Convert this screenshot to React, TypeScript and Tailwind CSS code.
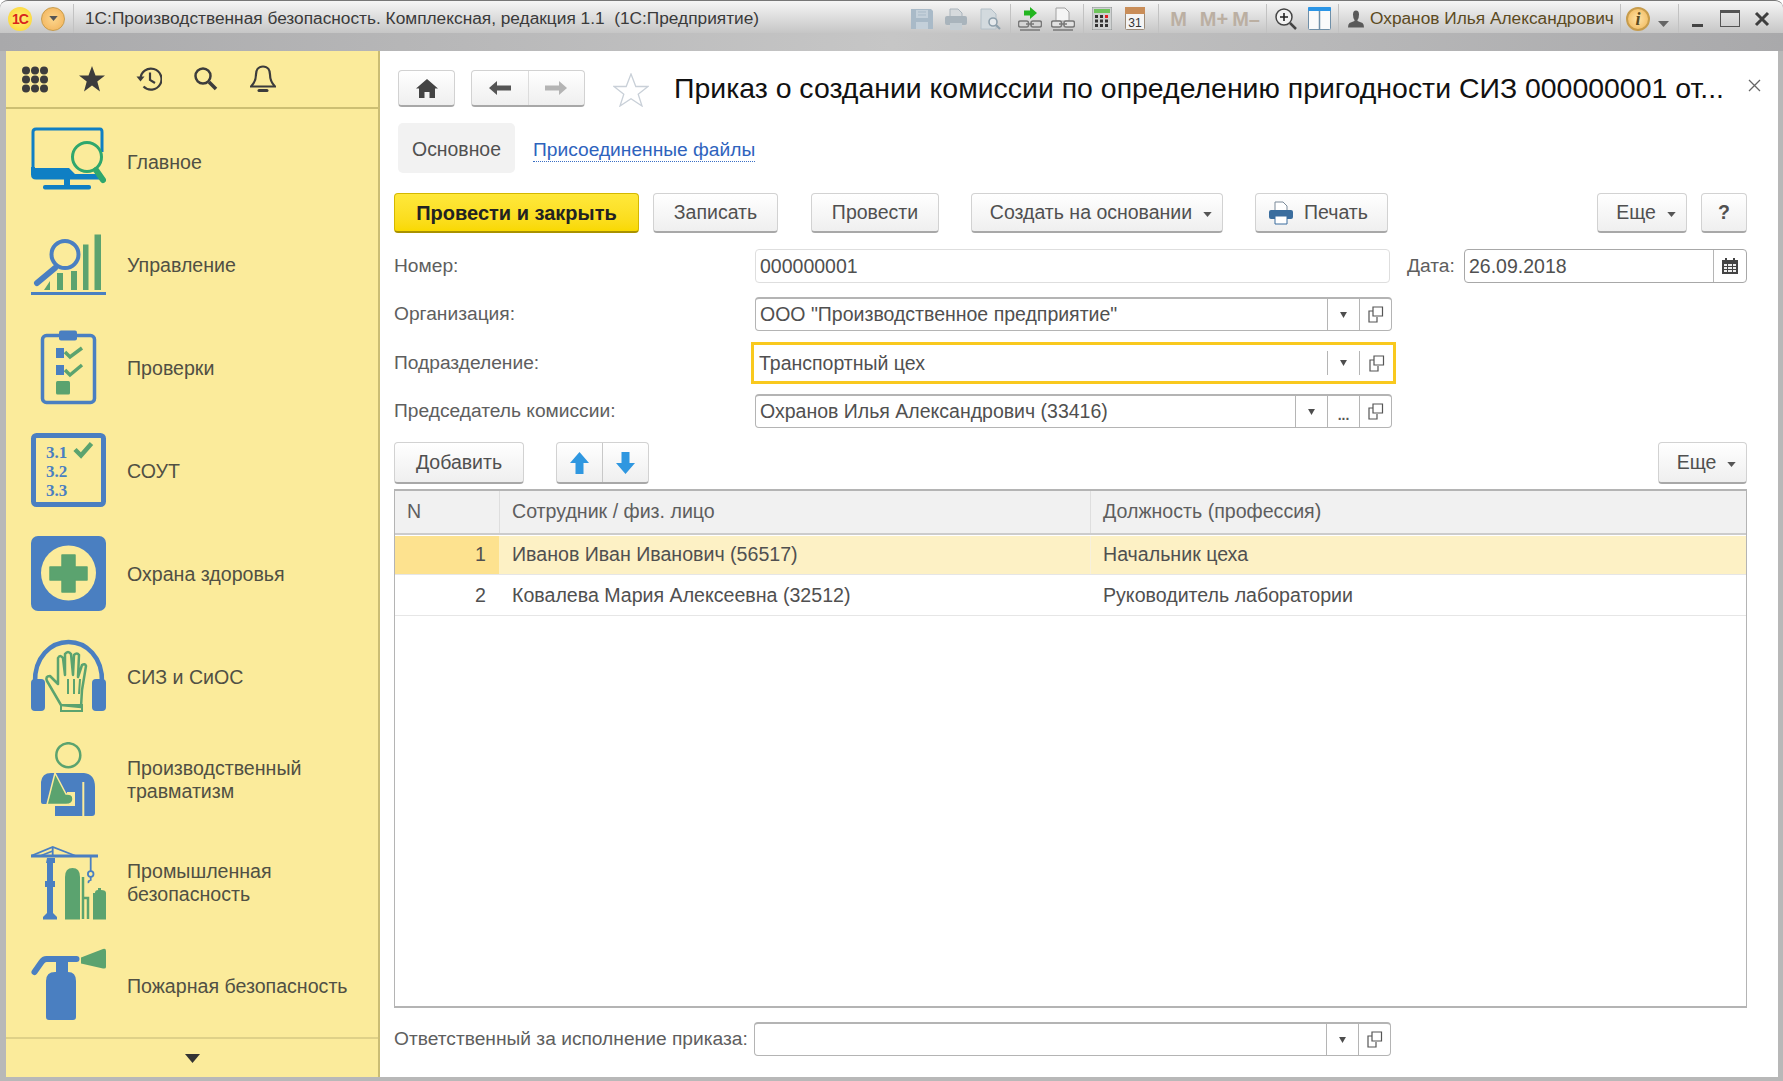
import type { ReactNode } from 'react';

const BLUE = '#4a7fc1';
const GREEN = '#5ba36f';

// Кнопка формы
const Btn = ({ className = '', children }: { className?: string; children: ReactNode }) => (
  <button className={`flex items-center justify-center rounded-[4px] border border-[#d2d2d2] border-b-2 border-b-[#a8a8a8] bg-linear-to-b from-white to-[#efefef] pt-[1px] text-[19.5px] text-[#505050] ${className}`}>
    {children}
  </button>
);

const Caret = ({ className = '' }: { className?: string }) => (
  <svg width="9" height="5" viewBox="0 0 10 6" className={className}>
    <path d="M0 0h10L5 6z" fill="#555" />
  </svg>
);

const SmallCaret = () => (
  <svg width="7" height="6" viewBox="0 0 8 7">
    <path d="M0 0h8L4 7z" fill="#4d4d4d" />
  </svg>
);

const OpenIcon = () => (
  <svg width="16" height="17" viewBox="0 0 16 17" fill="none" stroke="#555" strokeWidth="1.2">
    <path d="M5 1h9.5v9H5zM5 5H1v11h8v-5" />
  </svg>
);

const FieldCell = ({ children }: { children: ReactNode }) => (
  <div className="flex w-[32px] shrink-0 items-center justify-center self-stretch border-l border-[#b5b5b5]">{children}</div>
);

const Field = ({ value, extra = false }: { value: string; extra?: boolean }) => (
  <div className="flex h-[34px] w-[637px] items-center rounded-[4px] border border-[#b4b4b4] border-t-2 bg-white text-[19.5px] text-[#505050]">
    <span className="flex-1 pl-[4px]">{value}</span>
    <FieldCell><SmallCaret /></FieldCell>
    {extra && (
      <FieldCell>
        <span className="mt-[6px] text-[14px] font-bold leading-none text-[#555]">...</span>
      </FieldCell>
    )}
    <FieldCell><OpenIcon /></FieldCell>
  </div>
);

const Label = ({ children, className = 'w-[361px]' }: { children: ReactNode; className?: string }) => (
  <div className={`shrink-0 pt-[1px] text-[19.2px] text-[#5e5e5e] ${className}`}>{children}</div>
);

/* ---------- иконки разделов ---------- */
const MainIcon = () => (
  <svg width="75" height="75" viewBox="0 0 75 75" fill="none">
    <path d="M2 44V8q0-3 3-3h64q2 0 2 3v20" stroke="#0f7fc4" strokeWidth="3" />
    <path d="M0 43h4v1h34l6 6h22l5 5.5H5q-5 0-5-5z" fill="#0f7fc4" />
    <path d="M33 55h6v6h-6z" fill="#0f7fc4" />
    <rect x="12" y="61" width="48" height="4.5" rx="2" fill="#0f7fc4" />
    <circle cx="56" cy="33" r="14.5" fill="#fbeb9b" stroke="#2fa76d" strokeWidth="3" />
    <path d="M65 46l7 10" stroke="#2fa76d" strokeWidth="6" strokeLinecap="round" />
  </svg>
);

const ManageIcon = () => (
  <svg width="75" height="75" viewBox="0 0 75 75" fill="none">
    <path d="M13 63l6-9v9zM26 46h6v17h-6zM40 44h6v19h-6zM52 17.500h5.500V63H52zM63.500 7.500H70V63h-6.500z" fill={GREEN} />
    <circle cx="34" cy="27.500" r="13.500" fill="#fbeb9b" stroke={BLUE} strokeWidth="4" />
    <path d="M24 41L6 56" stroke={BLUE} strokeWidth="6" strokeLinecap="round" />
    <path d="M0 66.500h75" stroke={BLUE} strokeWidth="3" />
  </svg>
);

const ChecksIcon = () => (
  <svg width="75" height="75" viewBox="0 0 75 75" fill="none">
    <rect x="11.500" y="5.500" width="52" height="67" rx="4" stroke={BLUE} strokeWidth="3.500" />
    <rect x="28" y="0.500" width="18" height="10" rx="2" fill={BLUE} />
    <path d="M25 18h8v10h-8zM25 35h8v10h-8z" fill={BLUE} />
    <path d="M34 22l5 5 12-9M34 40l5 5 12-10" stroke={GREEN} strokeWidth="3.500" />
    <rect x="25" y="51" width="14" height="13.500" rx="1.500" fill={GREEN} />
  </svg>
);

const SoutIcon = () => (
  <svg width="75" height="75" viewBox="0 0 75 75" fill="none">
    <rect x="2.500" y="2.500" width="70" height="69" rx="3" stroke={BLUE} strokeWidth="5" />
    <g fill={BLUE} fontFamily="'Liberation Serif', serif" fontWeight="700" fontSize="17">
      <text x="15" y="25">3.1</text>
      <text x="15" y="44">3.2</text>
      <text x="15" y="63">3.3</text>
    </g>
    <path d="M44 16.500l6 6 10.500-12" stroke={GREEN} strokeWidth="4.500" />
  </svg>
);

const HealthIcon = () => (
  <svg width="75" height="75" viewBox="0 0 75 75">
    <rect width="75" height="75" rx="7" fill={BLUE} />
    <circle cx="37.500" cy="37" r="27.500" fill="#fbeb9b" />
    <path d="M31 19h13v12h12v13H44v12H31V44H19V31h12z" fill={GREEN} stroke={GREEN} strokeLinejoin="round" strokeWidth="1.500" />
  </svg>
);

const SizIcon = () => (
  <svg width="75" height="75" viewBox="0 0 75 75" fill="none">
    <path d="M4 44C3 18 20 3 37.500 3S72 18 71 44" stroke={BLUE} strokeWidth="4.500" />
    <rect y="40" width="14" height="32" rx="4" fill={BLUE} />
    <rect x="61" y="40" width="14" height="32" rx="4" fill={BLUE} />
    <path d="M30 66L16 42q-2-5 3-5l8 8V19q2-4 5 0l2 17V15q3-4 6 0l2 21 1-20q3-3 5 0l-1 22 4-12q3-2 4 1l-4 24-1 17z" stroke={GREEN} strokeWidth="2.500" strokeLinejoin="round" />
    <path d="M30 66h21v6H30zM37 40v15M43 40v15M49 40l-1 15" stroke={GREEN} strokeWidth="2" />
  </svg>
);

const InjuryIcon = () => (
  <svg width="75" height="75" viewBox="0 0 75 75" fill="none">
    <circle cx="37.300" cy="13.200" r="12" stroke={GREEN} strokeWidth="2.500" />
    <path d="M10 40q1-9 10-9h33q11 1 11 14v26q0 3-3 3H24v-10h20V50H36V62H12q-2 0-2-2z" fill={BLUE} />
    <path d="M24 31L16 62.500h19q7 0 7-5.500t-7-5z" fill={GREEN} stroke="#fbeb9b" strokeWidth="1.500" />
    <path d="M52.300 40v34" stroke="#fbeb9b" strokeWidth="2" />
  </svg>
);

const IndustryIcon = () => (
  <svg width="75" height="75" viewBox="0 0 75 75" fill="none">
    <path d="M0 11L21.700 2 45 11M9 11l12.700-5M21.700 2v9" stroke={BLUE} strokeWidth="1.800" />
    <path d="M0 9.500h67v3H0z" fill={BLUE} />
    <path d="M16 13h8v5h-2v18h2v6h-2v26l4 4v2.500H12V72l4-4V42h-2v-6h2V18h-1z" fill={BLUE} />
    <path d="M59.700 12v15" stroke={BLUE} strokeWidth="1.800" />
    <circle cx="59.700" cy="29" r="2.800" stroke={BLUE} strokeWidth="1.800" />
    <path d="M59.700 32v3q-3 1-2 3" stroke={BLUE} strokeWidth="1.800" />
    <path d="M34 32q0-9 7.500-9T49 32v42.500H34z" fill={GREEN} />
    <path d="M52 32v42M52 53h5v21" stroke={GREEN} strokeWidth="2.500" />
    <path d="M64 48q0-3 3-3v-2h3v2q5 0 5 3v26.500H62V48z" fill={GREEN} />
  </svg>
);

const FireIcon = () => (
  <svg width="75" height="75" viewBox="0 0 75 75" fill="none">
    <path d="M15 33q0-9 9-9h1V13h12v11q8 0 8 9v36q0 3-3 3H18q-3 0-3-3z" fill={BLUE} />
    <path d="M3.500 24l7-10q2-3 5-3h30" stroke={BLUE} strokeWidth="6" strokeLinecap="round" />
    <path d="M50 9.500L72 1q3-1 3 2v16q0 2-3 1.500L50 15.500z" fill={GREEN} />
  </svg>
);

const NAV: { title: ReactNode; icon: ReactNode }[] = [
  { title: 'Главное', icon: <MainIcon /> },
  { title: 'Управление', icon: <ManageIcon /> },
  { title: 'Проверки', icon: <ChecksIcon /> },
  { title: 'СОУТ', icon: <SoutIcon /> },
  { title: 'Охрана здоровья', icon: <HealthIcon /> },
  { title: 'СИЗ и СиОС', icon: <SizIcon /> },
  { title: <>Производственный<br />травматизм</>, icon: <InjuryIcon /> },
  { title: <>Промышленная<br />безопасность</>, icon: <IndustryIcon /> },
  { title: 'Пожарная безопасность', icon: <FireIcon /> },
];

const Sep = ({ className = '' }: { className?: string }) => (
  <div className={`h-[30px] w-px shrink-0 bg-[#c2c2c2] ${className}`} />
);

const TitleTools = () => (
  <div className="ml-auto mr-[13px] flex items-center">
    {/* сохранить */}
    <svg width="22" height="22" viewBox="0 0 22 22"><path d="M0 1h20l2 2v18H0z" fill="#a9bac8" /><path d="M5 2h12v8H5zM5 14h12v7H5z" fill="#c4d0da" /><path d="M7 4h8M7 7h8" stroke="#a9bac8" /></svg>
    {/* печать */}
    <svg width="22" height="22" viewBox="0 0 22 22" className="ml-[12px]"><path d="M5 9V1h8l4 4v4z" fill="#d6dadd" stroke="#aab4bc" /><rect y="8" width="22" height="9" rx="2" fill="#a9b4bc" /><path d="M5 15h12v7H5z" fill="#c4cdd3" /></svg>
    {/* просмотр */}
    <svg width="22" height="22" viewBox="0 0 22 22" fill="none" className="ml-[13px]"><path d="M1 21V1h10l5 5v15z" fill="#d3dade" stroke="#b4c0c8" /><circle cx="13" cy="14" r="4" fill="#e5e9ec" stroke="#8ea0ac" strokeWidth="1.600" /><path d="M16 17l4 4" stroke="#8ea0ac" strokeWidth="2.200" /></svg>
    <Sep className="ml-[8px]" />
    {/* ссылка со стрелкой */}
    <svg width="24" height="24" viewBox="0 0 24 24" fill="none" className="ml-[7px]"><path d="M6 3.500h6V0l7 6-7 6V8.500H6z" fill="#22b51f" /><rect x="0.500" y="14" width="10" height="6" rx="2" stroke="#787878" strokeWidth="1.500" fill="#d4d4d4" /><rect x="13" y="14" width="10.500" height="6" rx="2" stroke="#787878" strokeWidth="1.500" fill="#d4d4d4" /><path d="M8 17h8M2 23h20" stroke="#787878" strokeWidth="1.500" /></svg>
    <svg width="24" height="24" viewBox="0 0 24 24" fill="none" className="ml-[9px]"><path d="M5 14V1h9l4 4v9z" fill="#f5f5f5" stroke="#a0a0a0" /><rect x="0.500" y="14" width="10" height="6" rx="2" stroke="#787878" strokeWidth="1.500" fill="#e2e2e2" /><rect x="13" y="14" width="10.500" height="6" rx="2" stroke="#787878" strokeWidth="1.500" fill="#e2e2e2" /><path d="M8 17h8M2 23h20" stroke="#787878" strokeWidth="1.500" /></svg>
    <Sep className="ml-[8px]" />
    {/* калькулятор */}
    <svg width="20" height="23" viewBox="0 0 20 23" className="ml-[8px]"><rect width="20" height="23" rx="1.500" fill="#cfd2d2" stroke="#8b8f8f" /><rect x="2" y="2" width="16" height="4" fill="#6ec45c" /><path d="M3 8h3v3H3zM8 8h3v3H8zM3 12.500h3v3H3zM8 12.500h3v3H8zM13 12.500h3v3h-3zM3 17h3v3H3zM8 17h3v3H8zM13 17h3v3h-3z" fill="#333" /><path d="M13 8h3v3h-3z" fill="#e02020" /></svg>
    {/* календарь */}
    <svg width="20" height="23" viewBox="0 0 20 23" className="ml-[13px]"><rect x="0.500" y="0.500" width="19" height="22" rx="1" fill="#f4f4f4" stroke="#9a8a78" /><rect width="20" height="7" fill="#c98d58" /><text x="10" y="20" textAnchor="middle" fontSize="12" fill="#333" fontFamily="'Liberation Sans', sans-serif">31</text></svg>
    <Sep className="ml-[13px]" />
    <span className="ml-[11px] text-[20px] leading-none font-bold text-[#bbafa2]">M</span>
    <span className="ml-[13px] text-[20px] leading-none font-bold text-[#bbafa2]">M+</span>
    <span className="ml-[4px] text-[20px] leading-none font-bold text-[#bbafa2]">M–</span>
    <Sep className="ml-[6px]" />
    {/* масштаб */}
    <svg width="22" height="22" viewBox="0 0 22 22" fill="none" className="ml-[8px]"><circle cx="9" cy="9" r="8" fill="#f2f2f2" stroke="#444" strokeWidth="1.500" /><path d="M5 9h8M9 5v8" stroke="#222" strokeWidth="1.600" /><path d="M15 15l6 6" stroke="#444" strokeWidth="2.500" /></svg>
    {/* панели */}
    <svg width="23" height="23" viewBox="0 0 23 23" fill="none" className="ml-[11px]"><rect x="0.500" y="0.500" width="22" height="22" rx="1" fill="#fafafa" stroke="#6f8fa8" /><rect width="23" height="4" rx="1" fill="#2b95e6" /><path d="M11.500 4v18" stroke="#6f8fa8" strokeWidth="1.500" /></svg>
    <Sep className="ml-[7px]" />
    {/* пользователь */}
    <svg width="16" height="18" viewBox="0 0 16 18" className="ml-[9px]"><path d="M5 4.500a3 4 0 016 0q0 4-1.500 5.500V11l5 2q1.500 1 1.500 4.500H0Q0 14 1.500 13l5-2v-1Q5 8.500 5 4.500z" fill="#5a5a5a" /></svg>
    <span className="ml-[6px] w-[243px] text-[17.3px] whitespace-nowrap text-[#5c4a1e]">Охранов Илья Александрович</span>
    <Sep className="ml-[7px]" />
    {/* инфо */}
    <span className="ml-[5px] flex h-[24px] w-[24px] items-center justify-center rounded-full border-2 border-[#c79c4c] bg-radial from-[#fde3a7] to-[#f0b552] font-['Liberation_Serif'] text-[18px] font-bold italic leading-none text-[#5a4a20]">i</span>
    <svg width="11" height="6" viewBox="0 0 11 6" className="ml-[8px] mt-[10px]"><path d="M0 0h11L5.500 6z" fill="#666" /></svg>
    <Sep className="ml-[9px]" />
    {/* окно */}
    <div className="ml-[13px] mt-[14px] h-[3px] w-[11px] bg-[#444]" />
    <div className="ml-[17px] h-[17px] w-[20px] border border-t-[3px] border-[#555]" />
    <svg width="16" height="16" viewBox="0 0 16 16" className="ml-[14px]"><path d="M2 2l12 12M14 2L2 14" stroke="#3e3e3e" strokeWidth="3" /></svg>
  </div>
);

const SideTools = () => (
  <div className="flex h-[58px] shrink-0 items-center gap-[31px] border-b-2 border-[#cdbf72] pl-[16px]">
    <svg width="26" height="27" viewBox="0 0 26 27" fill="#3c3c3c">
      {[4, 13, 22].map(y => [4, 13, 22].map(x => <circle key={`${x}-${y}`} cx={x} cy={y + 0.5} r="4" />))}
    </svg>
    <svg width="26" height="26" viewBox="0 0 26 26"><path d="M13 0l3.500 9.500H26l-7.700 6L21 25.500l-8-6-8 6 2.700-10L0 9.500h9.500z" fill="#3c3c3c" /></svg>
    <svg width="26" height="26" viewBox="0 0 26 26" fill="none" stroke="#3c3c3c" strokeWidth="2.200"><path d="M4.500 13a10.500 10.500 0 1 1 3 7.500" /><path d="M0.500 10.500h8l-4 5z" fill="#3c3c3c" stroke="none" /><path d="M14 6.500V14l5 3" /></svg>
    <svg width="26" height="26" viewBox="0 0 26 26" fill="none" stroke="#3c3c3c"><circle cx="10" cy="10" r="7.500" strokeWidth="2.500" /><path d="M16 16l7 7" strokeWidth="3.500" /></svg>
    <svg width="26" height="28" viewBox="0 0 26 28" fill="none" stroke="#3c3c3c" strokeWidth="2.200"><path d="M13 1.500c-5 0-7 4-7 8 0 6-2 9-5 12h24c-3-3-5-6-5-12 0-4-2-8-7-8z" /><path d="M9 25.500h8" strokeWidth="3" strokeLinecap="round" /></svg>
  </div>
);

export default function App() {
  return (
    <div className="flex h-screen w-screen flex-col overflow-hidden rounded-t-[8px] border-t border-[#777] bg-[#b8b8b8] font-['Liberation_Sans',Arial,sans-serif]">
      {/* заголовок окна */}
      <div className="flex h-[32px] shrink-0 items-center bg-linear-to-b from-[#f6f6f6] to-[#c6c6c6] pt-[3px] pl-[8px]">
        <span className="flex h-[24px] w-[24px] items-center justify-center rounded-full bg-radial from-[#fff27a] to-[#fbd11e] text-[14px] font-bold leading-none tracking-[-1px] text-[#d9261c]">1С</span>
        <span className="ml-[9px] flex h-[24px] w-[24px] items-center justify-center rounded-full border border-[#c79c4c] bg-radial from-[#fcd68d] to-[#f1b055]">
          <Caret />
        </span>
        <Sep className="ml-[8px]" />
        <span className="ml-[11px] text-[17.3px] whitespace-nowrap text-[#3a3a3a]">1С:Производственная безопасность. Комплексная, редакция 1.1&nbsp; (1С:Предприятие)</span>
        <TitleTools />
      </div>
      <div className="h-[18px] shrink-0 bg-linear-to-r from-[#a9a9ab] via-[#c6c6c6] to-[#a9a9ab]" />

      <div className="flex min-h-0 flex-1 pr-[5px] pb-[4px] pl-[6px]">
        {/* панель разделов */}
        <aside className="flex w-[374px] shrink-0 flex-col border-r-2 border-[#cbbd74] bg-[#fbeb9b]">
          <SideTools />
          <nav className="flex-1 pt-[1px]">
            {NAV.map((item, i) => (
              <div key={i} className="flex h-[103px] items-center pl-[25px]">
                <div className="w-[96px] shrink-0">{item.icon}</div>
                <span className="pt-[1px] text-[19.6px] leading-[23px] text-[#505044]">{item.title}</span>
              </div>
            ))}
          </nav>
          <div className="flex h-[40px] shrink-0 items-center justify-center border-t-2 border-[#dfd188]">
            <svg width="15" height="9" viewBox="0 0 15 9"><path d="M0 0h15L7.500 9z" fill="#333" /></svg>
          </div>
        </aside>

        {/* форма */}
        <main className="flex min-w-0 flex-1 flex-col bg-white pr-[31px] pl-[14px]">
          <div className="mt-[19px] -mr-[14px] flex h-[37px] shrink-0 items-center">
            <Btn className="ml-[4px] h-[37px] w-[57px]">
              <svg width="22" height="19" viewBox="0 0 22 19"><path d="M11 0l11 9.500h-3V19h-5.500v-6h-5v6H3V9.500H0z" fill="#444" /></svg>
            </Btn>
            <div className="ml-[16px] flex h-[37px] w-[114px] rounded-[4px] border border-[#d2d2d2] border-b-2 border-b-[#a8a8a8] bg-linear-to-b from-white to-[#efefef]">
              <span className="flex flex-1 items-center justify-center border-r border-[#dcdcdc]">
                <svg width="22" height="14" viewBox="0 0 22 14"><path d="M8 0v4.500h14v5H8V14L0 7z" fill="#555" /></svg>
              </span>
              <span className="flex flex-1 items-center justify-center">
                <svg width="22" height="14" viewBox="0 0 22 14"><path d="M14 0v4.500H0v5h14V14l8-7z" fill="#b4b4b4" /></svg>
              </span>
            </div>
            <svg width="36" height="34" viewBox="0 0 36 34" fill="#fff" stroke="#c9d0d8" strokeWidth="1.300" className="ml-[28px] mt-[3px]">
              <path d="M18 1l4.800 12.500H35l-9.800 7.800L29 33l-11-7.300L7 33l3.800-11.700L1 13.500h12.200z" />
            </svg>
            <h1 className="ml-[25px] flex-1 text-[28.45px] font-normal whitespace-nowrap text-[#111]">Приказ о создании комиссии по определению пригодности СИЗ 000000001 от...</h1>
            <svg width="13" height="13" viewBox="0 0 13 13" className="mb-[6px]"><path d="M1 1l11 11M12 1L1 12" stroke="#666" strokeWidth="1.300" /></svg>
          </div>

          <div className="mt-[16px] flex h-[50px] shrink-0 items-center">
            <div className="ml-[4px] flex h-full w-[117px] items-center justify-center rounded-[5px] bg-[#f2f2f2] pt-[3px] text-[19.4px] text-[#505050]">Основное</div>
            <a className="mt-[4px] ml-[18px] border-b border-dotted border-[#3a6fc4] text-[19.2px] leading-[22px] text-[#2e63bd]">Присоединенные файлы</a>
          </div>

          <div className="mt-[20px] flex h-[40px] shrink-0">
            <button className="h-full w-[245px] rounded-[4px] border border-[#d4b800] border-b-2 border-b-[#a99200] bg-linear-to-b from-[#ffe83a] to-[#f9d900] text-[20px] font-bold text-[#222]">Провести и закрыть</button>
            <Btn className="ml-[14px] w-[125px]">Записать</Btn>
            <Btn className="ml-[33px] w-[128px]">Провести</Btn>
            <Btn className="ml-[32px] w-[252px] pl-[8px]">Создать на основании<Caret className="ml-[11px] mt-[2px]" /></Btn>
            <Btn className="ml-[32px] w-[133px] pr-[6px]">
              <svg width="24" height="24" viewBox="0 0 24 24" className="mr-[11px]"><path d="M6 10V1h8l4 4v5z" fill="#fff" stroke="#7a8a99" /><rect y="9" width="24" height="9" rx="2" fill="#3a6d9e" /><path d="M6 15h12v8H6z" fill="#fff" stroke="#3a6d9e" /></svg>
              Печать
            </Btn>
            <Btn className="ml-auto w-[90px] pl-[8px]">Еще<Caret className="ml-[11px] mt-[2px]" /></Btn>
            <Btn className="ml-[14px] w-[46px] font-bold">?</Btn>
          </div>

          <div className="mt-[16px] flex h-[34px] shrink-0 items-center">
            <Label>Номер:</Label>
            <div className="flex h-full w-[635px] items-center rounded-[4px] border border-[#dedede] pt-[1px] pl-[4px] text-[19.5px] text-[#505050]">000000001</div>
            <Label className="ml-[17px] w-[57px]">Дата:</Label>
            <div className="flex h-full flex-1 items-center rounded-[4px] border border-[#a8a8a8] pl-[4px] text-[19.5px] text-[#505050]">
              <span className="flex-1 pt-[1px]">26.09.2018</span>
              <div className="flex w-[33px] items-center justify-center self-stretch border-l border-[#b5b5b5]">
                <svg width="16" height="16" viewBox="0 0 16 16"><path d="M3 0h2v2h6V0h2v2h3v14H0V2h3z" fill="#444" /><path d="M2 6h3v2H2zM6 6h4v2H6zM11 6h3v2h-3zM2 9h3v2H2zM6 9h4v2H6zM11 9h3v2h-3zM2 12h3v2H2zM6 12h4v2H6zM11 12h3v2h-3z" fill="#eee" /></svg>
              </div>
            </div>
          </div>

          <div className="mt-[14px] flex h-[34px] shrink-0 items-center">
            <Label>Организация:</Label>
            <Field value={'ООО "Производственное предприятие"'} />
          </div>

          <div className="mt-[15px] flex h-[34px] shrink-0 items-center">
            <Label>Подразделение:</Label>
            <div className="-ml-[4px] flex h-[42px] w-[645px] shrink-0 items-center border-[3px] border-[#f9c91e] bg-white text-[19.5px] text-[#505050]">
              <span className="flex-1 pt-[1px] pl-[5px]">Транспортный цех</span>
              <div className="flex h-[24px] w-[32px] items-center justify-center border-l border-[#b5b5b5]"><SmallCaret /></div>
              <div className="flex h-[24px] w-[34px] items-center justify-center border-l border-[#b5b5b5]"><OpenIcon /></div>
            </div>
          </div>

          <div className="mt-[14px] flex h-[34px] shrink-0 items-center">
            <Label>Председатель комиссии:</Label>
            <Field value="Охранов Илья Александрович (33416)" extra />
          </div>

          <div className="mt-[14px] flex h-[42px] shrink-0">
            <Btn className="w-[130px]">Добавить</Btn>
            <div className="ml-[32px] flex w-[93px] rounded-[4px] border border-[#d2d2d2] border-b-2 border-b-[#a8a8a8] bg-linear-to-b from-white to-[#efefef]">
              <span className="flex flex-1 items-center justify-center border-r border-[#c8c8c8]">
                <svg width="19" height="22" viewBox="0 0 19 22"><path d="M9.500 0L19 11h-5.500v11h-8V11H0z" fill="#2f97e0" /></svg>
              </span>
              <span className="flex flex-1 items-center justify-center">
                <svg width="19" height="22" viewBox="0 0 19 22"><path d="M5.500 0h8v11H19L9.500 22 0 11h5.500z" fill="#2f97e0" /></svg>
              </span>
            </div>
            <Btn className="ml-auto w-[89px] pl-[8px]">Еще<Caret className="ml-[11px] mt-[2px]" /></Btn>
          </div>

          {/* табличная часть */}
          <div className="mt-[5px] flex min-h-0 flex-1 flex-col border border-t-2 border-b-2 border-[#b4b4b4] text-[19.6px] text-[#505050]">
            <div className="grid h-[44px] shrink-0 grid-cols-[104px_591px_1fr] items-center border-b-2 border-[#cccccc] bg-[#f1f1f1] text-[#5e5e5e]">
              <div className="pl-[12px]">N</div>
              <div className="flex h-full items-center border-l border-[#dedede] pl-[12px]">Сотрудник / физ. лицо</div>
              <div className="flex h-full items-center border-l border-[#dedede] pl-[12px]">Должность (профессия)</div>
            </div>
            <div className="mt-[1px] grid h-[38px] shrink-0 grid-cols-[104px_591px_1fr] items-center bg-[#fdf1c5]">
              <div className="flex h-full items-center justify-end bg-[#fde28f] pr-[13px]">1</div>
              <div className="pl-[13px]">Иванов Иван Иванович (56517)</div>
              <div className="flex h-full items-center border-l border-[#f7f0dc] pl-[12px]">Начальник цеха</div>
            </div>
            <div className="grid h-[42px] shrink-0 grid-cols-[104px_591px_1fr] items-center border-y border-[#e6e6e6] pt-[1px]">
              <div className="pr-[13px] text-right">2</div>
              <div className="pl-[13px]">Ковалева Мария Алексеевна (32512)</div>
              <div className="pl-[13px]">Руководитель лаборатории</div>
            </div>
          </div>

          <div className="mt-[13px] mb-[20px] flex h-[36px] shrink-0 items-center">
            <Label className="w-[360px]">Ответственный за исполнение приказа:</Label>
            <Field value="" />
          </div>
        </main>
      </div>
    </div>
  );
}
